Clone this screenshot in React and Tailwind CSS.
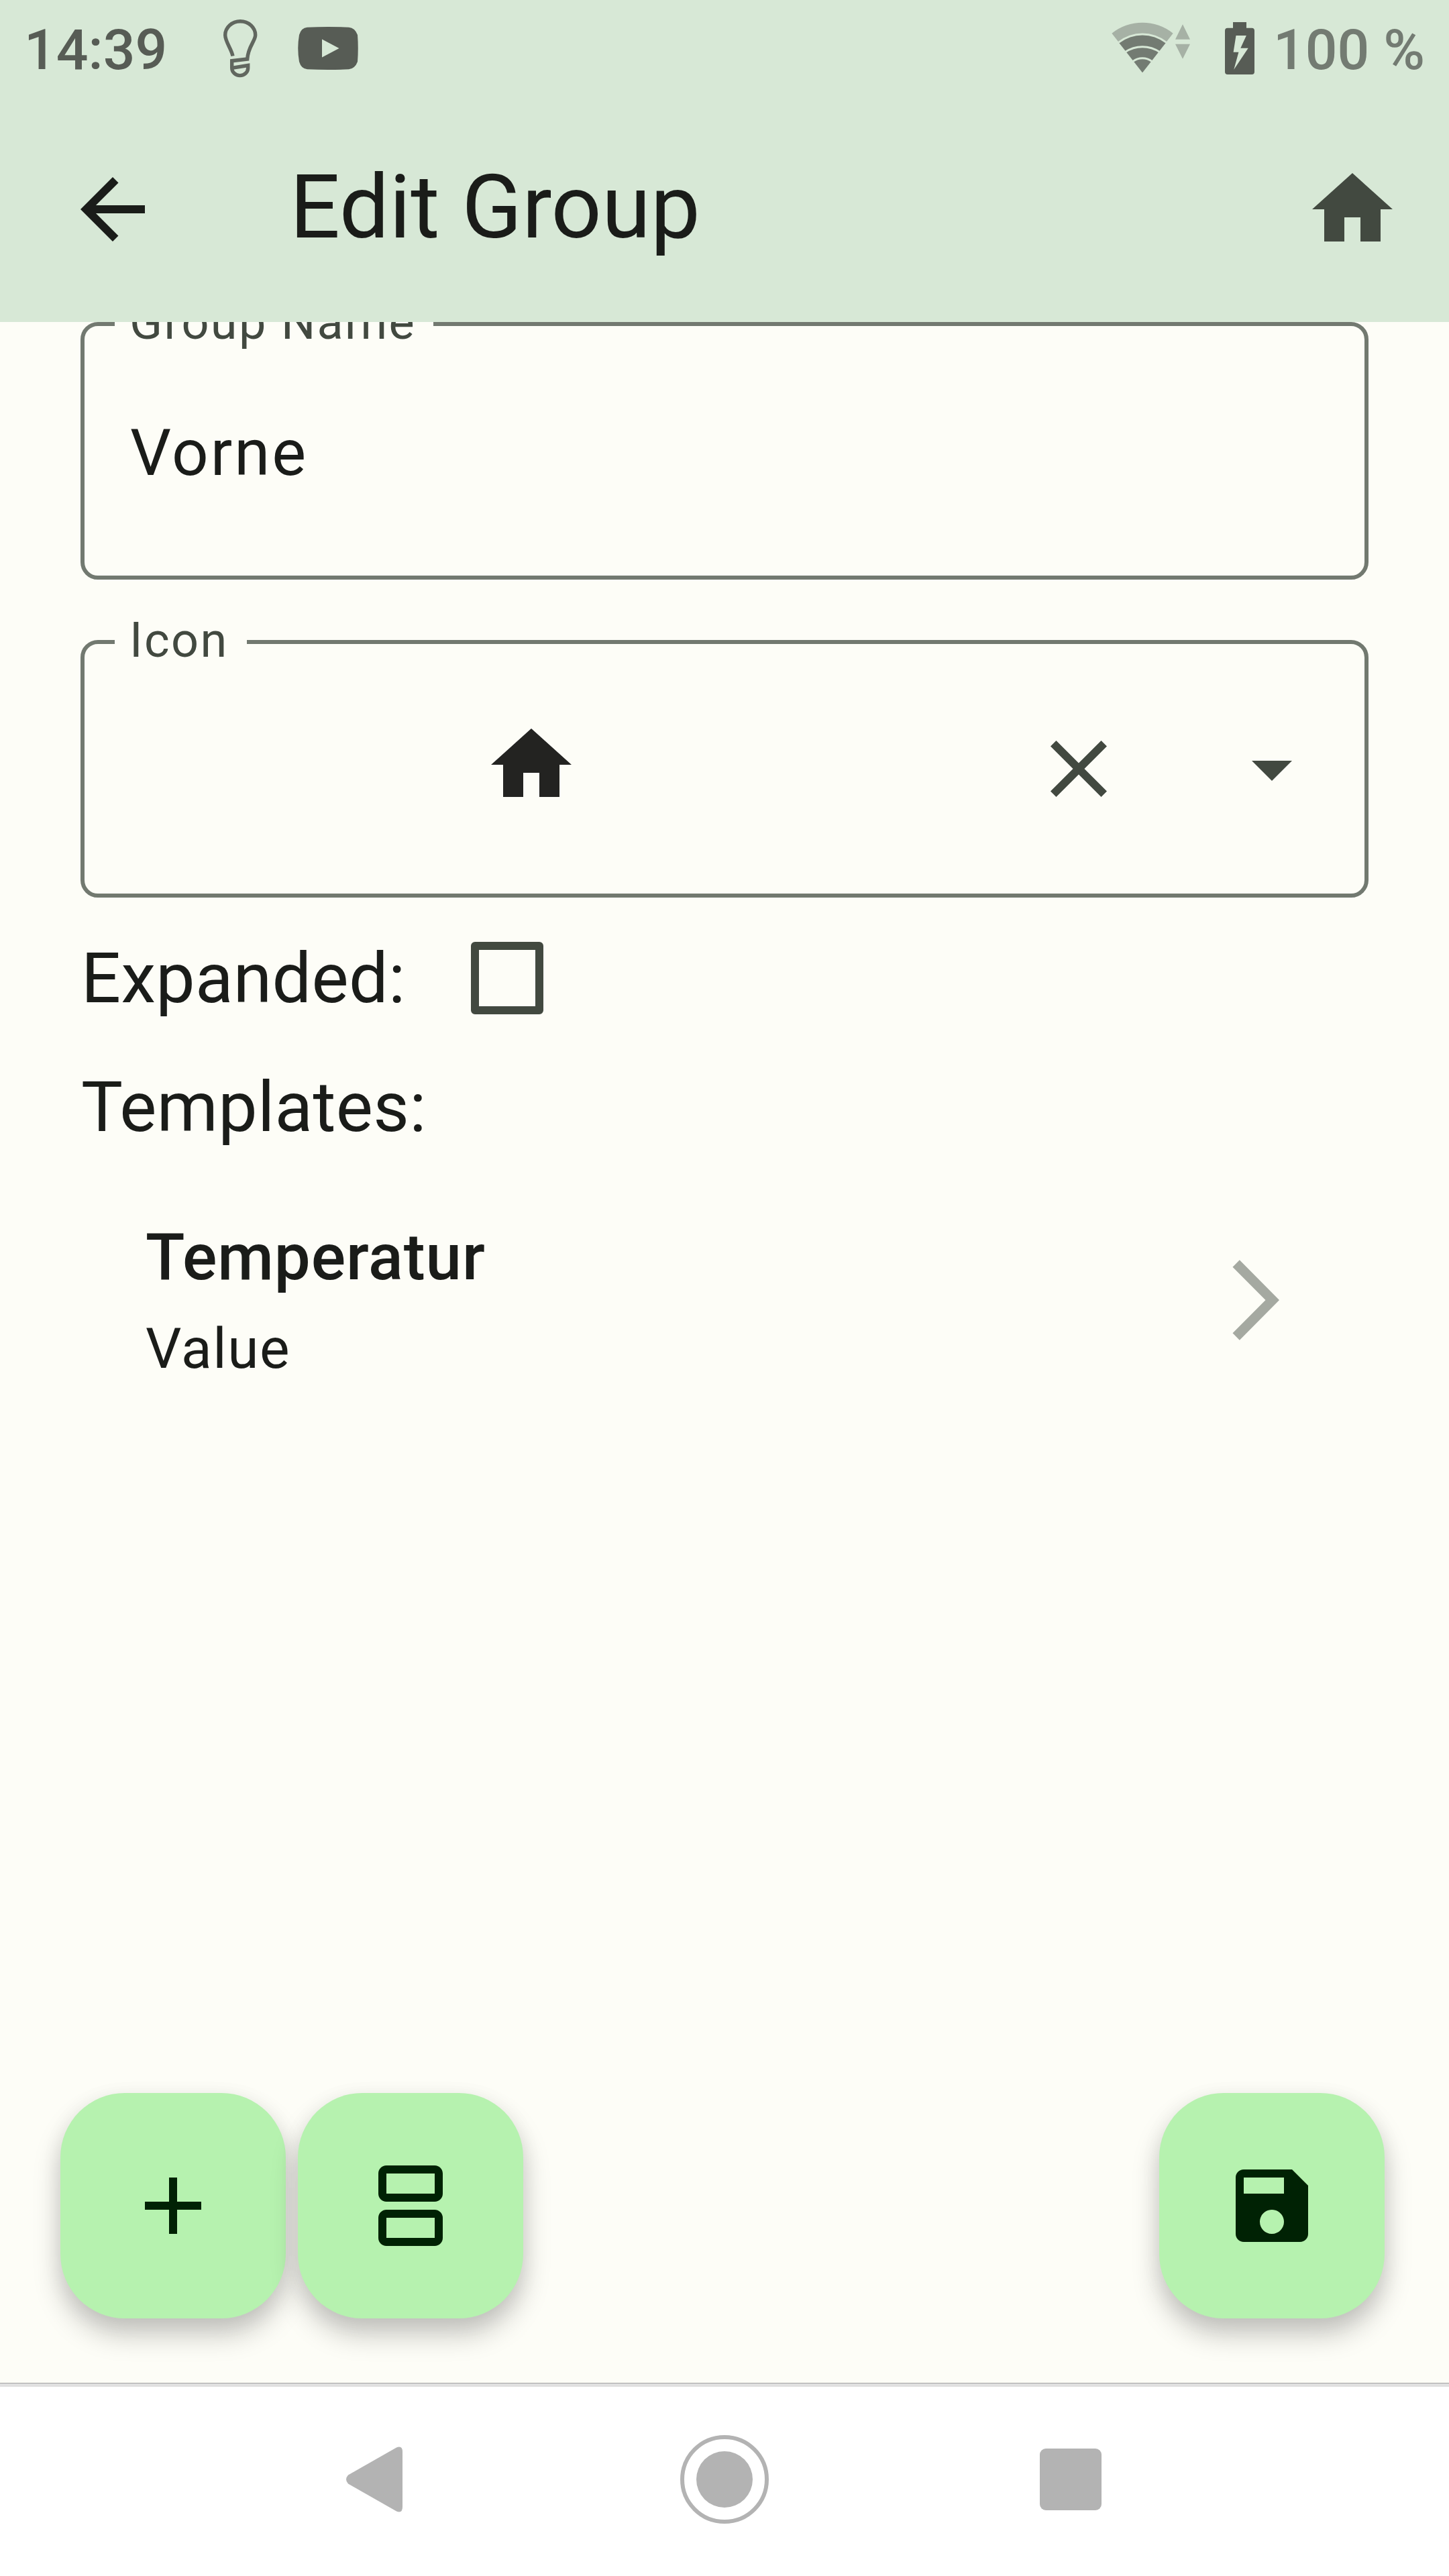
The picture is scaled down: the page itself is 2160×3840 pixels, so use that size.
const HOME = "M10 20v-6h4v6h5v-8h3L12 3 2 12h3v8z";

function Icon({ d, className }) {
  return (
    <svg viewBox="0 0 24 24" className={`h-[144px] w-[144px] shrink-0 ${className || ""}`} fill="currentColor">
      <path d={d} fillRule="evenodd" />
    </svg>
  );
}

function StatusBar() {
  return (
    <div className="flex h-[144px] items-center text-[84px] leading-[96px] font-medium text-[#575c55]">
      <span className="ml-[36px] w-[216px] pt-[6px] whitespace-nowrap">14:39</span>
      <svg viewBox="0 0 54 88" className="ml-[79px] h-[88px] w-[54px]" fill="none" stroke="#61675f" strokeWidth="5.400">
        <path d="M16 55.500C14 45 4.700 34 4.700 24.300A22.400 20.500 0 0 1 49.700 24.300C49.700 33 38.600 42 37.700 60L14.700 62.700V73.300A12 11.300 0 0 0 38.700 73.300V69.500L14.700 73.300" />
      </svg>
      <svg viewBox="0 0 90 64" className="ml-[59px] h-[64px] w-[90px]" fill="#575c55">
        <path fillRule="evenodd" d="M14 .8Q45-.8 76 .8Q85 1.500 89 12Q90.500 32 89 52Q85 62.500 76 63.200Q45 64.800 14 63.200Q5 62.500 2 52Q-1.500 32 2 12Q5 1.500 14 .8ZM36 18.600V45.600L61.500 32.100Z" />
      </svg>
      <svg viewBox="1656 30 120 84" className="ml-auto h-[84px] w-[120px]">
        <path fill="#a6b1a5" d="M1703 108.300L1657.400 49.700A73 73 0 0 1 1748.600 49.700Z" />
        <path fill="#d7e8d6" d="M1703 108.300L1666.800 62A58.500 58.500 0 0 1 1739.200 62Z" />
        <path fill="#737b72" d="M1703 108.300L1668.500 64.300A56 56 0 0 1 1737.500 64.300Z" />
        <path fill="none" stroke="#d7e8d6" strokeWidth="3" d="M1677 77.700A46 46 0 0 1 1729 77.700M1689 91.400A23.600 23.600 0 0 1 1717 91.400" />
        <path fill="#a6b1a5" d="M1752 58.700L1763 36.300L1774 58.700ZM1752 65.700H1774L1763 87.700Z" />
      </svg>
      <svg viewBox="0 0 44 78" className="ml-[50px] h-[78px] w-[44px]" fill="#575c55">
        <path
          fillRule="evenodd"
          d="M12 0H32V8.700H40Q44 8.700 44 12.700V74Q44 78 40 78H4Q0 78 0 74V12.700Q0 8.700 4 8.700H12ZM16.500 20L12.600 44.700H20.400L13.300 70.700L34.700 38.700H23.300L31.900 20Z"
        />
      </svg>
      <span className="mr-[36px] ml-[26px] w-[228px] pt-[6px] text-right whitespace-nowrap text-[#737b72]">100 %</span>
    </div>
  );
}

function OutlinedField({ label, labelWidth, children }) {
  return (
    <div className="relative flex h-[384px] w-[1920px] shrink-0 items-center rounded-[26px] border-[6px] border-[#727970]">
      <span
        className={`absolute top-[-41px] left-[45px] h-[72px] bg-[#fdfdf7] pl-[22px] text-[72px] leading-[72px] tracking-[2.35px] whitespace-nowrap text-[#424940] ${labelWidth}`}
      >
        {label}
      </span>
      {children}
    </div>
  );
}

function Fab({ className, children }) {
  return (
    <button
      className={`flex h-[336px] w-[336px] items-center justify-center rounded-[96px] bg-[#b6f2af] text-[#002204] shadow-[0_24px_40px_rgba(0,0,0,0.22),0_6px_32px_rgba(0,0,0,0.06)] ${className || ""}`}
    >
      {children}
    </button>
  );
}

export default function App() {
  return (
    <div className="flex h-[3840px] w-[2160px] flex-col overflow-hidden bg-[#fdfdf7] font-[Roboto,sans-serif] text-[#1a1c19]">
      <header className="h-[480px] shrink-0 bg-[#d7e8d6]">
        <StatusBar />
        <div className="flex h-[336px] items-center">
          <Icon className="ml-[96px]" d="M20 11H7.830l5.590-5.590L12 4l-8 8 8 8 1.410-1.410L7.830 13H20v-2z" />
          <h1 className="ml-[192px] pb-[6px] text-[132px] leading-[160px] whitespace-nowrap">Edit Group</h1>
          <Icon className="mr-[72px] ml-auto text-[#424940]" d={HOME} />
        </div>
      </header>

      <main className="flex grow flex-col overflow-hidden">
        <div className="flex flex-col gap-[90px] px-[120px]">
          <OutlinedField label="Group Name" labelWidth="w-[475px]">
            <span className="pt-[5px] pl-[68px] text-[96px] leading-[144px] tracking-[3px]">Vorne</span>
          </OutlinedField>
          <OutlinedField label="Icon" labelWidth="w-[197px]">
            <Icon className="mb-[12px] ml-[594px] text-[#232321]" d={HOME} />
            <Icon
              className="ml-auto text-[#424940]"
              d="M19 6.410L17.590 5 12 10.590 6.410 5 5 6.410 10.590 12 5 17.590 6.410 19 12 13.410 17.590 19 19 17.590 13.410 12z"
            />
            <Icon className="mr-[66px] ml-[144px] text-[#424940]" d="M7 10l5 5 5-5z" />
          </OutlinedField>
        </div>

        <div className="flex h-[240px] shrink-0 items-center pl-[121px] text-[104px] leading-[144px] tracking-[0.3px]">
          <span className="w-[581px] pt-[2px] whitespace-nowrap">Expanded:</span>
          <span className="h-[108px] w-[108px] rounded-[6px] border-[12px] border-[#424940]" />
        </div>
        <div className="h-[144px] shrink-0 pt-[1px] pl-[121px] text-[104px] leading-[144px] tracking-[0.3px]">Templates:</div>

        <div className="flex h-[432px] shrink-0 items-center pr-[253px] pl-[217px]">
          <div className="grow pt-[2px]">
            <div className="text-[96px] leading-[144px] font-medium tracking-[0.9px]">Temperatur</div>
            <div className="text-[84px] leading-[130px] tracking-[1.5px]">Value</div>
          </div>
          <svg viewBox="0 0 70 120" className="h-[120px] w-[70px]" fill="#a5a9a1">
            <path d="M.5 10.700L10.800.3L70 60L10.800 119.700L.5 109.300L49.500 60Z" />
          </svg>
        </div>

        <div className="mt-auto mb-[96px] flex shrink-0 pr-[96px] pl-[90px]">
          <Fab>
            <Icon d="M19 13h-6v6h-2v-6H5v-2h6V5h2v6h6z" />
          </Fab>
          <Fab className="ml-[18px]">
            <Icon d="M18 2H6C4.900 2 4 2.900 4 4V9C4 10.100 4.900 11 6 11H18C19.100 11 20 10.100 20 9V4C20 2.900 19.100 2 18 2ZM18 9H6V4H18ZM18 13H6C4.900 13 4 13.900 4 15V20C4 21.100 4.900 22 6 22H18C19.100 22 20 21.100 20 20V15C20 13.900 19.100 13 18 13ZM18 20H6V15H18Z" />
          </Fab>
          <Fab className="ml-auto">
            <Icon d="M17 3H5c-1.110 0-2 .9-2 2v14c0 1.100.89 2 2 2h14c1.100 0 2-.9 2-2V7l-4-4zm-5 16c-1.660 0-3-1.340-3-3s1.340-3 3-3 3 1.340 3 3-1.340 3-3 3zm3-10H5V5h10v4z" />
          </Fab>
        </div>
      </main>

      <nav className="flex h-[288px] shrink-0 items-center bg-white pl-[516px] shadow-[inset_0_1px_0_#a3a3a3,inset_0_6px_0_#e0e0e0]">
        <svg viewBox="0 0 84 98" className="h-[98px] w-[84px]" fill="#b3b3b3">
          <path d="M3 42.500L75 1.500Q84-2 84 8V90Q84 100 75 96.500L3 55.500Q-3 49 3 42.500Z" />
        </svg>
        <svg viewBox="0 0 132 132" className="ml-[414px] h-[132px] w-[132px]">
          <circle cx="66" cy="66" r="63" fill="none" stroke="#b3b3b3" strokeWidth="6" />
          <circle cx="66" cy="66" r="42" fill="#b3b3b3" />
        </svg>
        <div className="ml-[404px] h-[92px] w-[92px] rounded-[9px] bg-[#b3b3b3]" />
      </nav>
    </div>
  );
}
